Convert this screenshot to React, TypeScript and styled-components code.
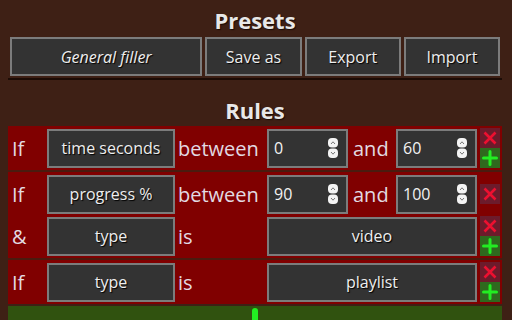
import styled, { createGlobalStyle } from "styled-components";

type Rule = {
  id: number;
  label: string;
  field: string;
  op: string;
  values: string[];
  canAdd: boolean;
};

const groups: Rule[][] = [
  [{ id: 1, label: "If", field: "time seconds", op: "between", values: ["0", "60"], canAdd: true }],
  [
    { id: 2, label: "If", field: "progress %", op: "between", values: ["90", "100"], canAdd: false },
    { id: 3, label: "&", field: "type", op: "is", values: ["video"], canAdd: true },
  ],
  [{ id: 4, label: "If", field: "type", op: "is", values: ["playlist"], canAdd: true }],
];

const GlobalStyle = createGlobalStyle`
  html, body {
    margin: 0;
    overflow: hidden;
    background: #3e2015;
    font-family: "Open Sans", "Noto Sans", sans-serif;
  }
`;

const Page = styled.div`
  padding: 0 10px 0 8px;
`;

const Title = styled.h2<{ $top: number }>`
  margin: 0;
  padding-top: ${({ $top }) => $top}px;
  text-align: center;
  font-size: 22px;
  line-height: 31px;
  font-weight: 700;
  color: #e8e8e8;
  text-shadow: 1px 1px 1px #1a0a04;
`;

const PresetBar = styled.div`
  display: grid;
  grid-template-columns: 2fr 1fr 1fr 1fr;
  gap: 3px;
  padding: 1px 2px 2px;
  border-bottom: 2px solid #1c0c06;
`;

const Button = styled.button<{ $italic?: boolean }>`
  box-sizing: border-box;
  height: 39px;
  margin: 0;
  padding: 0 4px;
  border: 2px solid #7c7c7c;
  background: #333333;
  color: #eeeeee;
  font-family: inherit;
  font-size: 16px;
  font-style: ${({ $italic }) => ($italic ? "italic" : "normal")};
  text-shadow: 1px 1px 1px #000;
  white-space: nowrap;
`;

const RuleList = styled.div`
  display: flex;
  flex-direction: column;
  gap: 2px;
  background: #4a1b0f;
`;

const Group = styled.div`
  display: flex;
  flex-direction: column;
  gap: 2px;
  padding: 2px;
  background: #800000;
`;

const Row = styled.div`
  display: grid;
  grid-template-columns: 37px 128px 92px 81px 48px 81px 1fr;
  align-items: center;
  height: 40px;
`;

const Word = styled.span<{ $pad: number }>`
  padding-left: ${({ $pad }) => $pad}px;
  font-size: 20px;
  color: #e2dae2;
  white-space: nowrap;
`;

const FieldButton = styled(Button)`
  width: 100%;
`;

const ValueButton = styled(Button)`
  grid-column: 4 / span 3;
  width: 100%;
`;

const NumberBox = styled.div`
  box-sizing: border-box;
  height: 39px;
  display: flex;
  align-items: center;
  justify-content: space-between;
  padding: 0 8px 0 5px;
  border: 2px solid #7c7c7c;
  background: #333333;
  color: #f2f2f2;
  font-size: 16px;
`;

const Actions = styled.div`
  display: flex;
  flex-direction: column;
  justify-self: end;
  width: 20px;
  margin-right: 0px;
`;

const ActionButton = styled.div<{ $kind: "remove" | "add" }>`
  display: flex;
  align-items: center;
  justify-content: center;
  height: 20px;
  background: ${({ $kind }) => ($kind === "remove" ? "#6c1b2b" : "#2f691e")};
`;

const AddBar = styled.div`
  display: flex;
  justify-content: center;
  margin-top: 2px;
  height: 40px;
  padding-top: 2px;
  background: #30520f;
`;

const Spinner = () => (
  <svg width="10" height="20" viewBox="0 0 10 20">
    <rect x="0" y="0" width="10" height="9.5" rx="4" fill="#f4f4f4" />
    <rect x="0" y="10.5" width="10" height="9.5" rx="4" fill="#f4f4f4" />
    <path d="M3 6 L5 3.8 L7 6" stroke="#777" strokeWidth="1" fill="none" />
    <path d="M3 14 L5 16.2 L7 14" stroke="#777" strokeWidth="1" fill="none" />
  </svg>
);

const Cross = () => (
  <svg width="14" height="14" viewBox="0 0 14 14">
    <path d="M1.5 1.5 L12.5 12.5 M12.5 1.5 L1.5 12.5" stroke="#ec1030" strokeWidth="2.6" />
  </svg>
);

const Plus = ({ size, width }: { size: number; width: number }) => (
  <svg width={size} height={size} viewBox={`0 0 ${size} ${size}`}>
    <path
      d={`M${size / 2} ${width / 2} V${size - width / 2} M${width / 2} ${size / 2} H${size - width / 2}`}
      stroke="#22ee22"
      strokeWidth={width}
      strokeLinecap="round"
    />
  </svg>
);

const RuleRow = ({ rule }: { rule: Rule }) => (
  <Row>
    <Word $pad={2}>{rule.label}</Word>
    <FieldButton>{rule.field}</FieldButton>
    <Word $pad={3}>{rule.op}</Word>
    {rule.values.length === 2 ? (
      <>
        <NumberBox>
          {rule.values[0]}
          <Spinner />
        </NumberBox>
        <Word $pad={5}>and</Word>
        <NumberBox>
          {rule.values[1]}
          <Spinner />
        </NumberBox>
      </>
    ) : (
      <ValueButton>{rule.values[0]}</ValueButton>
    )}
    <Actions>
      <ActionButton $kind="remove">
        <Cross />
      </ActionButton>
      {rule.canAdd && (
        <ActionButton $kind="add">
          <Plus size={16} width={3} />
        </ActionButton>
      )}
    </Actions>
  </Row>
);

export default function App() {
  return (
    <Page>
      <GlobalStyle />
      <Title $top={5}>Presets</Title>
      <PresetBar>
        <Button $italic>General filler</Button>
        <Button>Save as</Button>
        <Button>Export</Button>
        <Button>Import</Button>
      </PresetBar>
      <Title $top={15}>Rules</Title>
      <RuleList>
        {groups.map((group, i) => (
          <Group key={i}>
            {group.map((rule) => (
              <RuleRow key={rule.id} rule={rule} />
            ))}
          </Group>
        ))}
      </RuleList>
      <AddBar>
        <Plus size={34} width={6} />
      </AddBar>
    </Page>
  );
}
